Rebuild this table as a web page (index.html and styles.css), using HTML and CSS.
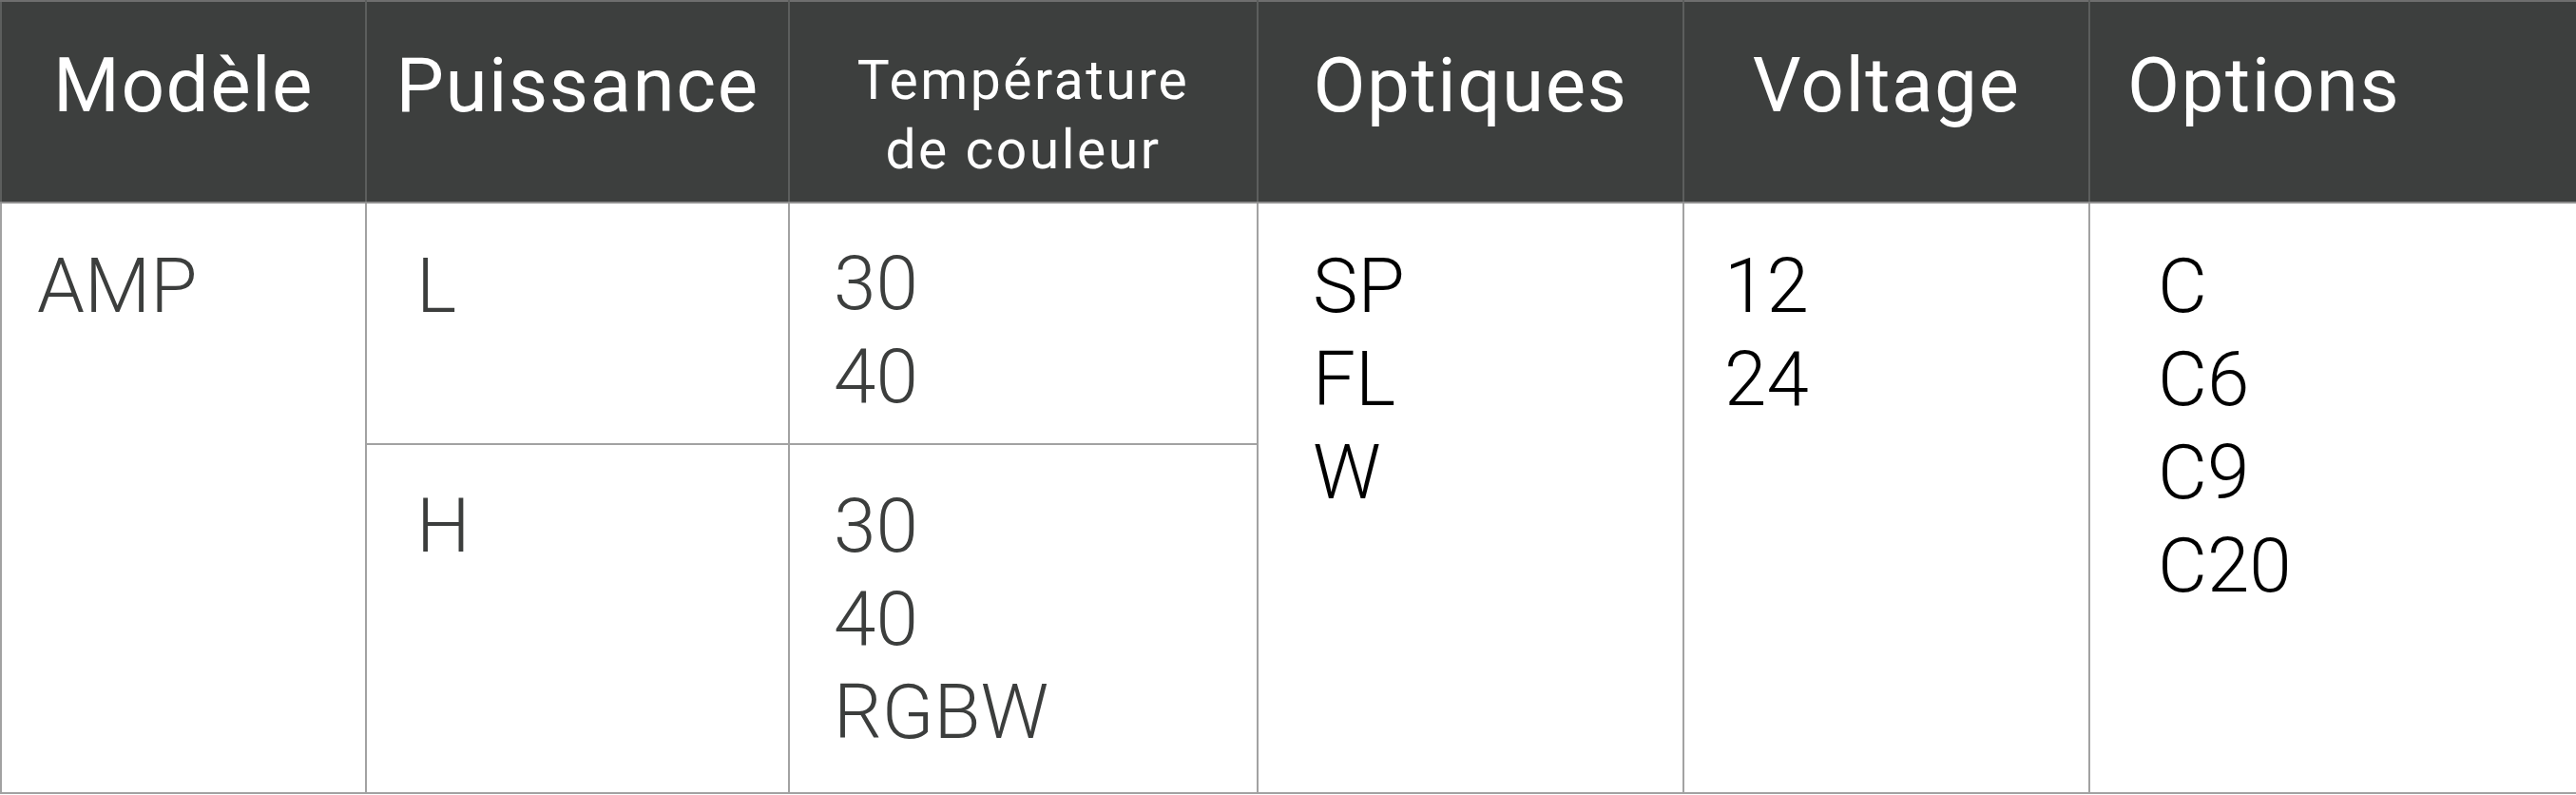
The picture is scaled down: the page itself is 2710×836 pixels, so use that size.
FILE: index.html
```html
<!DOCTYPE html>
<html lang="fr">
<head>
<meta charset="utf-8">
<title>AMP</title>
<link rel="stylesheet" href="styles.css">
</head>
<body>
<table class="spec">
  <colgroup>
    <col class="c-model">
    <col class="c-power">
    <col class="c-temp">
    <col class="c-optic">
    <col class="c-volt">
    <col class="c-opt">
  </colgroup>
  <thead>
    <tr class="head">
      <th>Modèle</th>
      <th>Puissance</th>
      <th class="th-temp">Température<br>de couleur</th>
      <th>Optiques</th>
      <th>Voltage</th>
      <th class="th-opt">Options</th>
    </tr>
  </thead>
  <tbody>
    <tr class="row-l">
      <td rowspan="2" class="model">AMP</td>
      <td class="power">L</td>
      <td class="temp">30<br>40</td>
      <td rowspan="2" class="optic">SP<br>FL<br>W</td>
      <td rowspan="2" class="volt">12<br>24</td>
      <td rowspan="2" class="opt">C<br>C6<br>C9<br>C20</td>
    </tr>
    <tr class="row-h">
      <td class="power sub">H</td>
      <td class="temp sub">30<br>40<br>RGBW</td>
    </tr>
  </tbody>
</table>
</body>
</html>
```

FILE: styles.css
```css
html, body {
  margin: 0;
  padding: 0;
  background: #ffffff;
}

.spec {
  width: 2710px;
  table-layout: fixed;
  border-collapse: collapse;
  font-family: Roboto, "Liberation Sans", sans-serif;
}

.c-model { width: 384px; }
.c-power { width: 445px; }
.c-temp  { width: 493px; }
.c-optic { width: 448px; }
.c-volt  { width: 427px; }
.c-opt   { width: 513px; }

.head {
  height: 212px;
  background: #3d3f3e;
}

.head th {
  color: #ffffff;
  font-weight: 400;
  font-size: 80px;
  line-height: 94px;
  letter-spacing: 1.5px;
  text-align: center;
  vertical-align: top;
  padding: 41px 0 0 0;
  border: 2px solid #5c5e5d;
  border-top: 2px solid #6e6e6e;
  border-bottom: 2px solid #8f8f8f;
  white-space: nowrap;
}

.head th.th-temp {
  font-size: 57px;
  line-height: 73px;
  letter-spacing: 2.5px;
  padding-top: 46px;
}

.head th.th-opt {
  text-align: left;
  padding-left: 39px;
}

.spec td {
  font-size: 80px;
  font-weight: 300;
  line-height: 98px;
  vertical-align: top;
  padding: 38px 0 0 0;
  border: 2px solid #a2a2a2;
  color: #3c3e3d;
  white-space: nowrap;
}

.row-l { height: 254px; }
.row-h { height: 367px; }

.spec td.temp { padding-top: 35px; }
.spec td.sub { padding-top: 36px; }

.spec td.model { padding-left: 37px; }
.spec td.power { padding-left: 52px; }
.spec td.temp  { padding-left: 46px; }
.spec td.optic { padding-left: 57px; color: #000000; }
.spec td.volt  { padding-left: 42px; color: #000000; }
.spec td.opt   { padding-left: 71px; color: #000000; }
```
